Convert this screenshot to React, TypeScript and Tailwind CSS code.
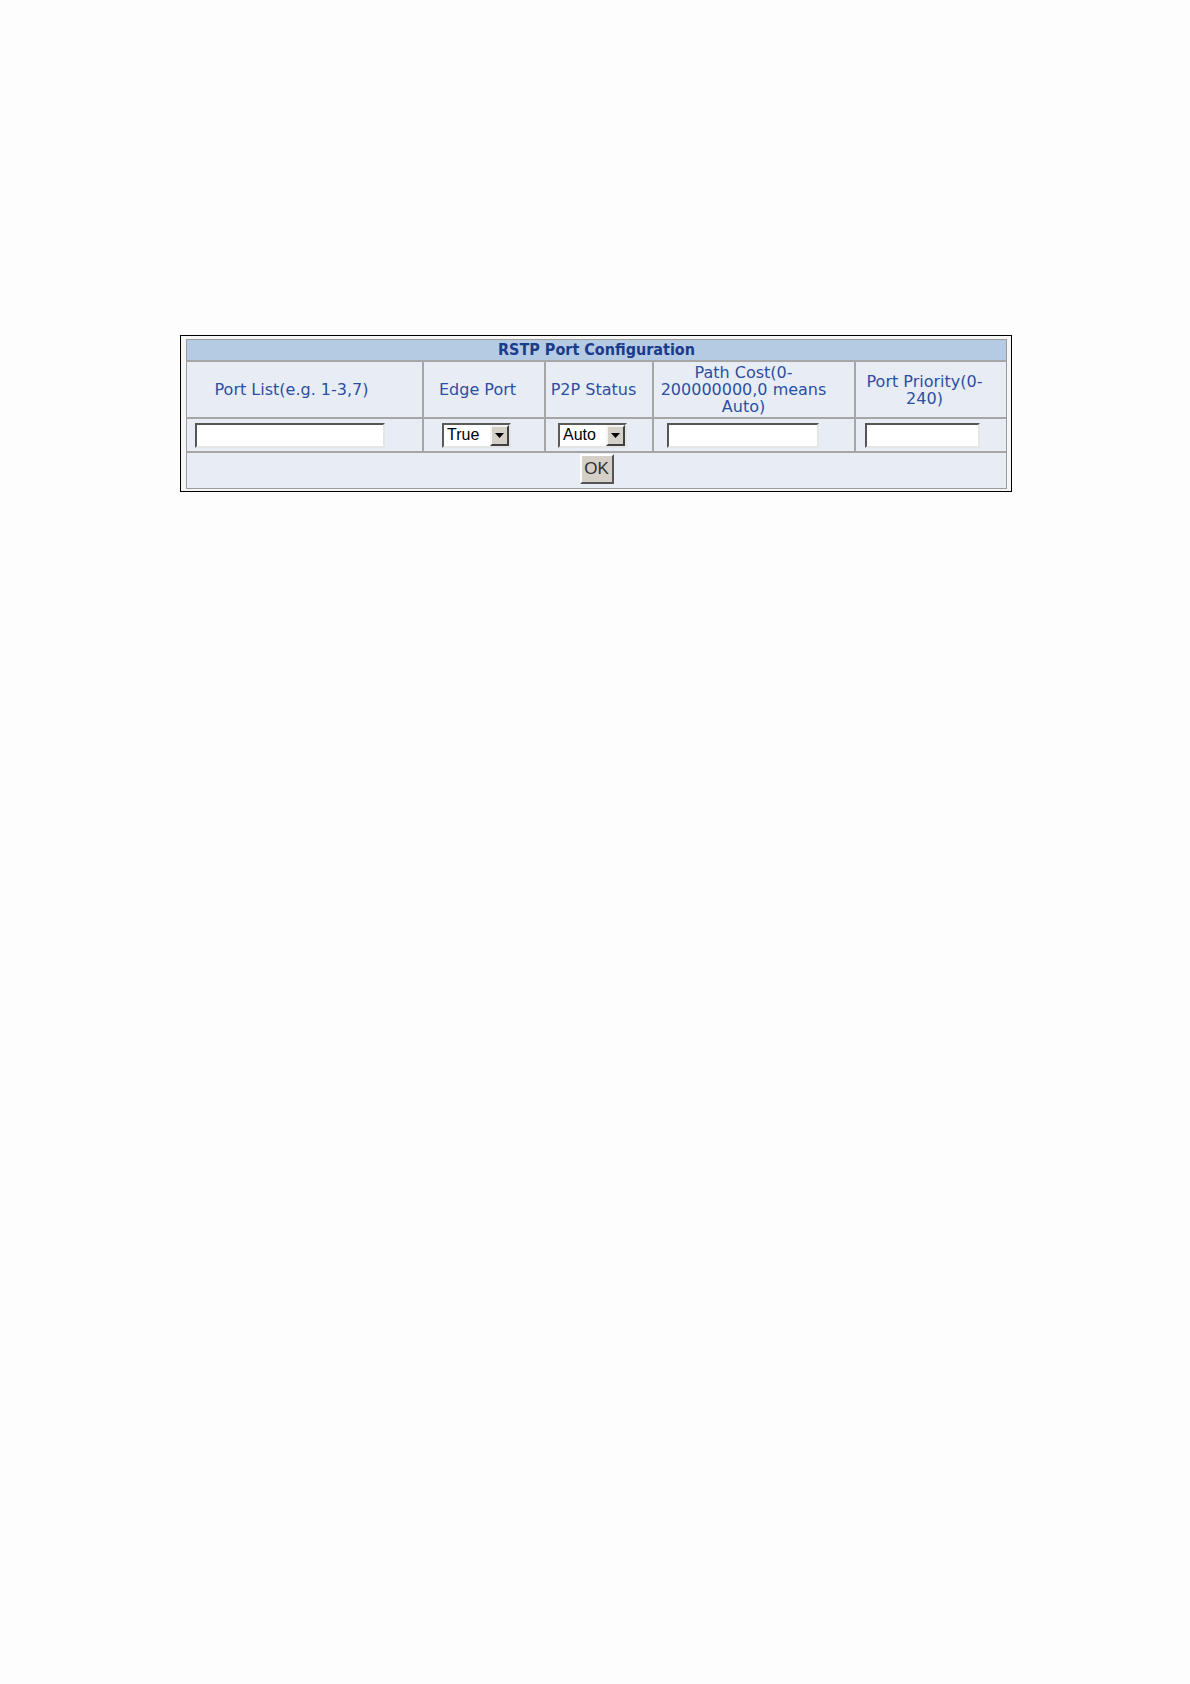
const labelFont = { fontFamily: '"DejaVu Sans", Verdana, sans-serif' };

function Select({ value, width }: { value: string; width: number }) {
  return (
    <div
      className="flex h-[25px] items-stretch border-2 border-t-[#5a5a5a] border-l-[#5a5a5a] border-r-[#e4e4e4] border-b-[#e4e4e4] bg-white"
      style={{ width }}
    >
      <span className="flex flex-1 items-center pl-[3px] text-[16px] leading-none text-black [font-family:'Liberation_Sans',Arial,sans-serif]">
        {value}
      </span>
      <span className="flex w-[19px] items-center justify-center border-2 border-t-[#f4f4f4] border-l-[#f4f4f4] border-r-[#404040] border-b-[#404040] bg-[#d4d0c8]">
        <svg width="9" height="5" viewBox="0 0 9 5">
          <path d="M0 0h9L4.5 5z" fill="#000" />
        </svg>
      </span>
    </div>
  );
}

function TextBox({ width }: { width: number }) {
  return (
    <div
      className="h-[25px] border-2 border-t-[#555] border-l-[#555] border-r-[#e6e6e6] border-b-[#e6e6e6] bg-white"
      style={{ width }}
    />
  );
}

export default function App() {
  return (
    <div className="min-h-[1684px] w-full bg-[#fdfdfd]">
      <div className="pl-[180px] pt-[335px]">
        <div className="w-[832px] border border-black bg-[#f6f6f6] pb-[2px] pl-[5px] pr-[4px] pt-[3px]">
          <div
            className="grid grid-cols-[235px_120px_106px_200px_150px] grid-rows-[20px_55px_32px_35px] gap-[2px] border border-[#9c9c9c] bg-[#a6a6a6]"
            style={labelFont}
          >
            <div className="col-span-5 flex items-center justify-center bg-[#b5cbe3] text-[16px] font-bold text-[#1b3b8c] [font-family:'DejaVu_Sans_Condensed','DejaVu_Sans',sans-serif]">
              RSTP Port Configuration
            </div>

            <div className="flex items-center justify-center bg-[#e8edf5] pr-[26px] text-center text-[16px] leading-[17px] text-[#2c4fa3]">
              Port List(e.g. 1-3,7)
            </div>
            <div className="flex items-center justify-center bg-[#e8edf5] pr-[13px] text-center text-[16px] leading-[17px] text-[#2c4fa3]">
              Edge Port
            </div>
            <div className="flex items-center justify-center bg-[#e8edf5] pr-[11px] text-center text-[16px] leading-[17px] text-[#2c4fa3]">
              P2P Status
            </div>
            <div className="flex items-center justify-center bg-[#e8edf5] pr-[21px] text-center text-[16px] leading-[17px] text-[#2c4fa3]">
              <span>
                Path Cost(0-
                <br />
                200000000,0 means
                <br />
                Auto)
              </span>
            </div>
            <div className="flex items-center justify-center bg-[#e8edf5] pr-[13px] text-center text-[16px] leading-[17px] text-[#2c4fa3]">
              <span>
                Port Priority(0-
                <br />
                240)
              </span>
            </div>

            <div className="flex items-center bg-[#e8edf5] pl-[8px]">
              <TextBox width={190} />
            </div>
            <div className="flex items-center bg-[#e8edf5] pl-[18px]">
              <Select value="True" width={69} />
            </div>
            <div className="flex items-center bg-[#e8edf5] pl-[12px]">
              <Select value="Auto" width={69} />
            </div>
            <div className="flex items-center bg-[#e8edf5] pl-[13px]">
              <TextBox width={152} />
            </div>
            <div className="flex items-center bg-[#e8edf5] pl-[9px]">
              <TextBox width={115} />
            </div>

            <div className="col-span-5 flex items-start justify-center bg-[#e8edf5] pt-[1px]">
              <button
                type="button"
                className="flex h-[30px] w-[34px] items-center justify-center border-2 border-t-white border-l-white border-r-[#555] border-b-[#555] bg-[#d4d0c8] text-[17px] text-[#303030] [font-family:'Liberation_Sans',Arial,sans-serif]"
              >
                OK
              </button>
            </div>
          </div>
        </div>
      </div>
    </div>
  );
}
